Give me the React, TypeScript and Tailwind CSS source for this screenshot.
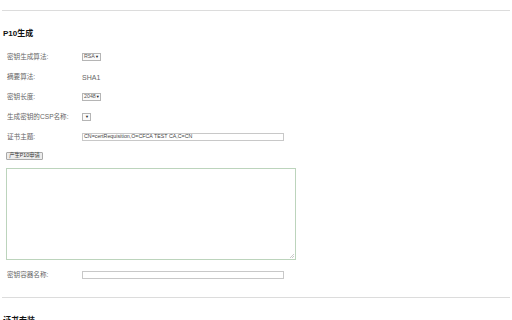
import React from 'react';

const FONT = '"Liberation Sans", "Noto Sans CJK SC", sans-serif';

function MiniSelect({ value, width }: { value: string; width: string }) {
  return (
    <div
      className={`flex h-[8px] ${width} items-center justify-between border border-[#b5b5b5] bg-[#fafafa] px-[1px] text-[5.3px] leading-none text-[#555]`}
    >
      <span>{value}</span>
      <span className="text-[4px] text-[#222]">▼</span>
    </div>
  );
}

function Row({ label, children }: { label: string; children: React.ReactNode }) {
  return (
    <div className="flex h-[20px] items-center">
      <div className="w-[82px] pl-[7px] text-[6.6px] leading-none text-[#666]">{label}</div>
      {children}
    </div>
  );
}

export default function App() {
  return (
    <div className="h-[320px] w-[512px] overflow-hidden bg-white" style={{ fontFamily: FONT }}>
      <div className="h-[10px]" />
      <div className="mx-[2px] border-t border-[#dcdcdc]" />

      <div className="mt-[17px] h-[12px] pl-[3px] text-[8px] font-bold leading-[12px] text-[#111]">P10生成</div>

      <div className="mt-[7px]">
        <Row label="密钥生成算法:">
          <MiniSelect value="RSA" width="w-[19px]" />
        </Row>
        <Row label="摘要算法:">
          <span className="text-[7px] leading-none text-[#666]">SHA1</span>
        </Row>
        <Row label="密钥长度:">
          <MiniSelect value="2048" width="w-[19px]" />
        </Row>
        <Row label="生成密钥的CSP名称:">
          <MiniSelect value="" width="w-[9px]" />
        </Row>
        <Row label="证书主题:">
          <div className="flex h-[8px] w-[202px] items-center border border-[#c8c8c8] px-[1px] text-[5.3px] leading-none text-[#444]">
            CN=certRequisition,O=CFCA TEST CA,C=CN
          </div>
        </Row>
      </div>

      <div className="mt-[5px] pl-[6px]">
        <button className="flex h-[8px] w-[37px] items-center justify-center rounded-[1px] border border-[#a9a9a9] bg-[#ececec] text-[5.3px] leading-none text-[#333]">
          产生P10申请
        </button>
      </div>

      <div className="mt-[8px] pl-[6px]">
        <div className="relative h-[92px] w-[290px] border border-[#bcd4bc]">
          <svg className="absolute bottom-[1px] right-[1px]" width="4" height="4" viewBox="0 0 4 4">
            <path d="M0 4 L4 0 M2 4 L4 2" stroke="#aaa" strokeWidth="0.6" />
          </svg>
        </div>
      </div>

      <div className="mt-[5px]">
        <Row label="密钥容器名称:">
          <div className="h-[8px] w-[202px] border border-[#c8c8c8]" />
        </Row>
      </div>

      <div className="mt-[12px] mx-[2px] border-t border-[#dcdcdc]" />

      <div className="mt-[17px] h-[12px] pl-[3px] text-[8px] font-bold leading-[12px] text-[#111]">证书安装</div>
    </div>
  );
}
